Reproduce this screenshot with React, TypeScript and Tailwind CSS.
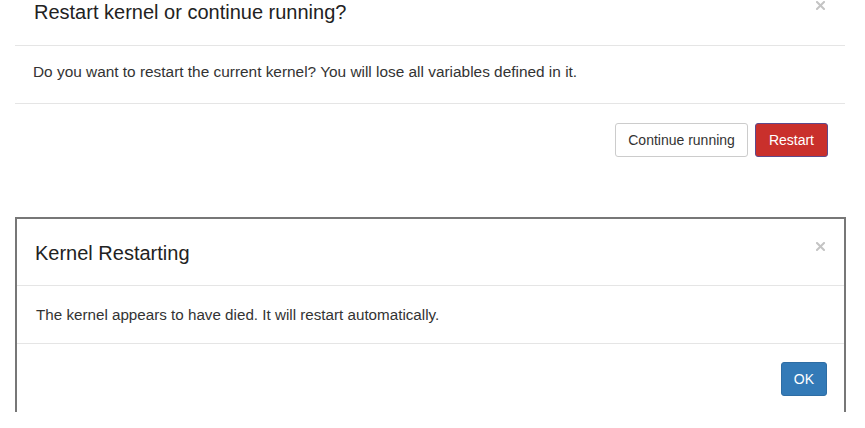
import React from "react";

function CloseIcon() {
  return (
    <svg width="9" height="9" viewBox="0 0 9 9" className="mt-[1px] shrink-0">
      <path d="M1 1 L8 8 M8 1 L1 8" stroke="#c4c4c4" strokeWidth="2" strokeLinecap="square" />
    </svg>
  );
}

function Button({
  children,
  variant,
}: {
  children: React.ReactNode;
  variant: "default" | "danger" | "primary";
}) {
  const styles = {
    default: "bg-white border-[#cccccc] text-[#333333] px-3",
    danger: "bg-[#c9302c] border-[#5d4a8c] text-white px-[13px]",
    primary: "bg-[#337ab7] border-[#2e6da4] text-white px-3",
  }[variant];

  return (
    <button
      type="button"
      className={`h-[34px] border rounded-[3px] text-[14px] leading-none ${styles}`}
    >
      {children}
    </button>
  );
}

export default function App() {
  return (
    <div
      className="w-[865px] h-[428px] bg-white overflow-hidden"
      style={{ fontFamily: '"Liberation Sans", Arial, sans-serif' }}
    >
      {/* restart confirm dialog, cut off at the top */}
      <div className="ml-[15px] w-[830px] h-[176px] bg-white">
        <div className="h-[46px] border-b border-[#e5e5e5] flex items-start justify-between pl-[19px] pr-[20px]">
          <h4 className="text-[20px] leading-[24px] text-[#222222]">
            Restart kernel or continue running?
          </h4>
          <CloseIcon />
        </div>
        <div className="h-[58px] border-b border-[#e5e5e5] pl-[18px] pt-[15px]">
          <p className="text-[15.4px] leading-[21px] text-[#333333]">
            Do you want to restart the current kernel? You will lose all variables defined in it.
          </p>
        </div>
        <div className="flex justify-end gap-[7px] pt-[19px] pr-[17px]">
          <Button variant="default">Continue running</Button>
          <Button variant="danger">Restart</Button>
        </div>
      </div>

      {/* kernel restarting dialog */}
      <div className="mt-[41px] ml-[15px] w-[831px] h-[195px] border-t-2 border-x-2 border-[#777777] bg-white">
        <div className="h-[67px] border-b border-[#e5e5e5] flex items-start justify-between pl-[18px] pr-[19px] pt-[22px]">
          <h4 className="text-[20px] leading-[24px] text-[#222222]">Kernel Restarting</h4>
          <CloseIcon />
        </div>
        <div className="h-[58px] border-b border-[#e5e5e5] pl-[19px] pt-[18px]">
          <p className="text-[15.2px] leading-[21px] text-[#333333]">
            The kernel appears to have died. It will restart automatically.
          </p>
        </div>
        <div className="flex justify-end pt-[18px] pr-[17px]">
          <Button variant="primary">OK</Button>
        </div>
      </div>
    </div>
  );
}
